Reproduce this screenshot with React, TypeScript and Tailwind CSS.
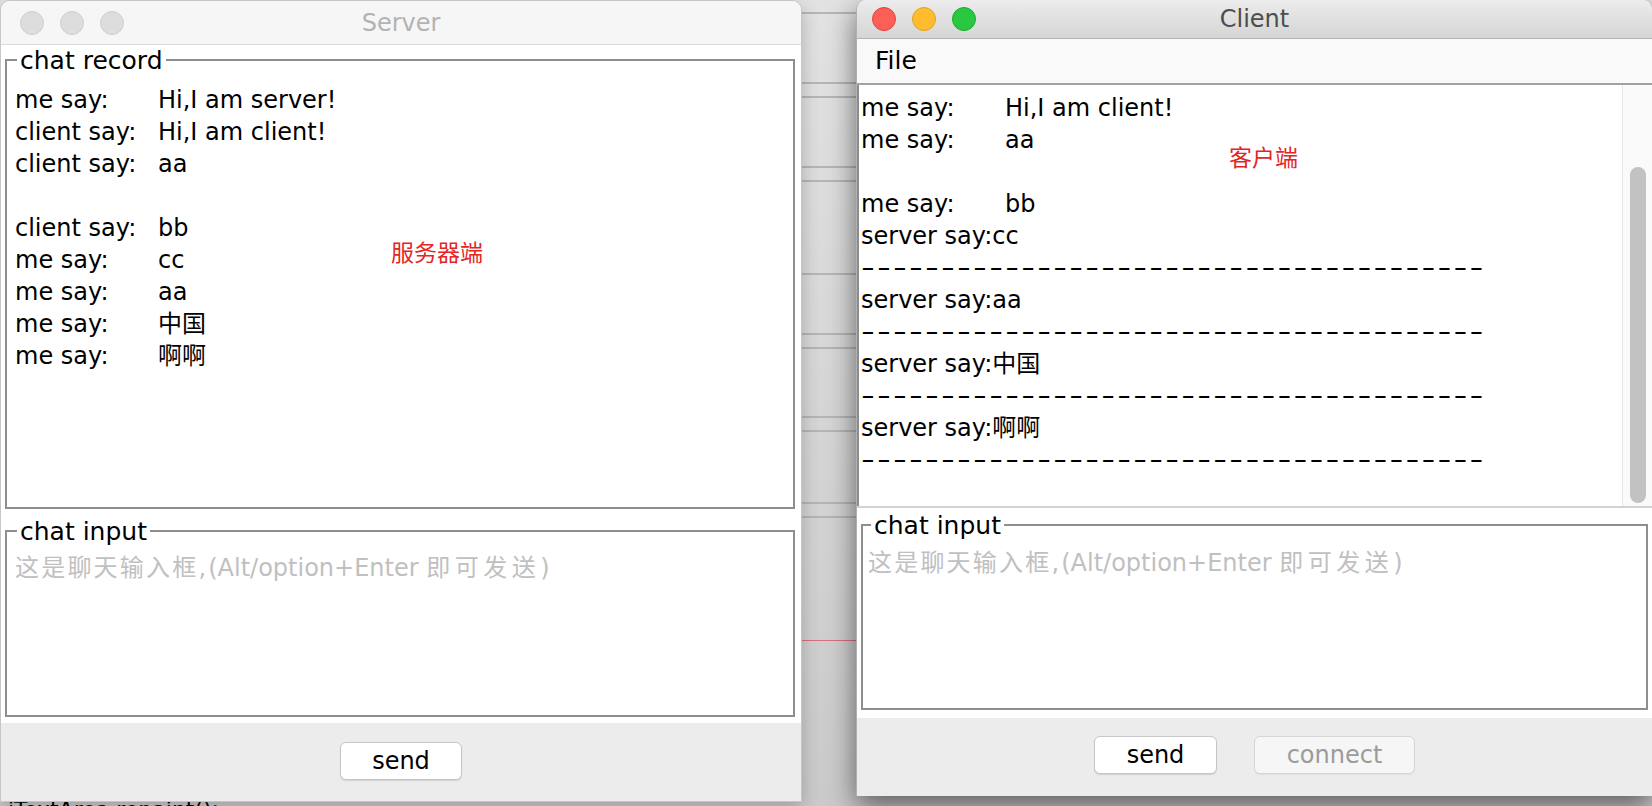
import React from 'react';

const ui = "font-['DejaVu_Sans','Noto_Sans_CJK_SC',sans-serif]";

// horizontal rules of the window that sits behind, visible in the gap
const desktopLines = [
  'top-[12px]', 'top-[82px]', 'top-[96px]', 'top-[166px]', 'top-[180px]', 'top-[273px]',
  'top-[333px]', 'top-[347px]', 'top-[416px]', 'top-[430px]', 'top-[502px]', 'top-[516px]',
];

function TitledBox({ label, className, labelClass, children }: { label: string, className: string, labelClass: string, children?: React.ReactNode }) {
  return (
    <div className={`relative border-2 border-[#8e8e8e] ${className}`}>
      <span className={`absolute top-[-13px] bg-white px-[3px] text-[25px] leading-[25px] text-black ${labelClass}`}>{label}</span>
      {children}
    </div>
  );
}

function Placeholder({ className }: { className: string }) {
  return (
    <div className={`whitespace-pre text-[24px] leading-[32px] text-[#c0c0c0] ${className}`}>
      <span className="tracking-[2.2px]">这是聊天输入框,</span>
      (Alt/option+Enter <span className="tracking-[4.5px]">即可发送</span>)
    </div>
  );
}

function Row({ who, text, col }: { who: string, text: string, col: string }) {
  return (
    <div className="whitespace-pre">
      <span className={`inline-block ${col}`}>{who}</span>
      {text}
    </div>
  );
}

function Dashes() {
  return (
    <div className="h-[32px] whitespace-pre">
      <span className="inline-block origin-left scale-x-[1.6] tracking-[1.35px]">{'-'.repeat(39)}</span>
    </div>
  );
}

function ServerWindow() {
  const rows: [string, string][] = [
    ['me say:', 'Hi,I am server!'],
    ['client say:', 'Hi,I am client!'],
    ['client say:', 'aa'],
    ['', ''],
    ['client say:', 'bb'],
    ['me say:', 'cc'],
    ['me say:', 'aa'],
    ['me say:', '中国'],
    ['me say:', '啊啊'],
  ];

  return (
    <div className="absolute left-0 top-0 z-10 flex h-[802px] w-[802px] flex-col overflow-hidden rounded-t-[10px] border border-[#c6c6c6] bg-white shadow-[0_6px_18px_rgba(0,0,0,0.22)]">
      {/* Title bar (inactive) */}
      <div className="relative flex h-[44px] shrink-0 items-center border-b border-[#dcdcdc] bg-[#f6f6f6]">
        <div className="flex gap-[16px] pl-[19px]">
          <div className="h-[24px] w-[24px] rounded-full border border-[#cfcfcf] bg-[#dddddd]" />
          <div className="h-[24px] w-[24px] rounded-full border border-[#cfcfcf] bg-[#dddddd]" />
          <div className="h-[24px] w-[24px] rounded-full border border-[#cfcfcf] bg-[#dddddd]" />
        </div>
        <div className="absolute inset-0 flex items-center justify-center text-[24px] text-[#b3b3b3]">Server</div>
      </div>

      {/* Body */}
      <div className="flex h-[678px] shrink-0 flex-col bg-white pl-[4px] pr-[6px]">
        <TitledBox label="chat record" className="mt-[14px] h-[450px]" labelClass="left-[10px]">
          <div className="pl-[8px] pt-[23px] text-[24px] leading-[32px] text-black">
            {rows.map(([who, text], i) => (
              <div key={i} className="h-[32px]">
                {who && <Row who={who} text={text} col="w-[143px]" />}
              </div>
            ))}
          </div>
          <span className="absolute left-[384px] top-[180px] text-[23px] leading-[24px] text-[#e3261f]">服务器端</span>
        </TitledBox>
        <TitledBox label="chat input" className="mt-[21px] h-[187px]" labelClass="left-[10px]">
          <Placeholder className="pl-[8px] pt-[20px]" />
        </TitledBox>
      </div>

      {/* Buttons */}
      <div className="flex flex-1 justify-center bg-[#ececec] pt-[19px]">
        <button className="flex h-[38px] w-[122px] items-center justify-center rounded-[6px] border border-[#c6c6c6] bg-white text-[24px] leading-none text-black shadow-[0_1px_1px_rgba(0,0,0,0.12)]">
          send
        </button>
      </div>
    </div>
  );
}

function ClientWindow() {
  return (
    <div className="absolute left-[856px] top-0 z-20 flex h-[796px] w-[796px] flex-col overflow-hidden rounded-t-[10px] border-l border-[#b0b0b0] bg-white shadow-[0_10px_28px_rgba(0,0,0,0.55)]">
      {/* Title bar (active) */}
      <div className="relative flex h-[39px] shrink-0 items-center border-b border-[#b4b4b4] bg-linear-to-b from-[#ececec] to-[#d5d5d5]">
        <div className="flex gap-[16px] pl-[15px]">
          <div className="h-[24px] w-[24px] rounded-full border border-[#e0443e] bg-[#fd5e57]" />
          <div className="h-[24px] w-[24px] rounded-full border border-[#dea123] bg-[#febc2e]" />
          <div className="h-[24px] w-[24px] rounded-full border border-[#1aab29] bg-[#28c840]" />
        </div>
        <div className="absolute inset-0 flex items-center justify-center text-[24px] text-[#4d4d4d]">Client</div>
      </div>

      {/* Menu bar */}
      <div className="flex h-[46px] shrink-0 items-center border-b-2 border-[#a2a2a2] bg-[#f9f9f9] pl-[18px] text-[25px] text-black">
        File
      </div>

      {/* Chat record, scrolled */}
      <div className="flex h-[421px] shrink-0">
        <div className="relative flex-1 border-l-2 border-[#8c8c8c] pl-[2px] pt-[7px] text-[24px] leading-[32px] text-black">
          <Row who="me say:" text="Hi,I am client!" col="w-[144px]" />
          <Row who="me say:" text="aa" col="w-[144px]" />
          <div className="h-[32px]" />
          <Row who="me say:" text="bb" col="w-[144px]" />
          <div>server say:cc</div>
          <Dashes />
          <div>server say:aa</div>
          <Dashes />
          <div>server say:中国</div>
          <Dashes />
          <div>server say:啊啊</div>
          <Dashes />
          <span className="absolute left-[370px] top-[61px] text-[23px] leading-[24px] text-[#e3261f]">客户端</span>
        </div>
        <div className="flex w-[30px] flex-col border-l border-[#e6e6e6] bg-[#fafafa] pb-[3px] pl-[7px] pt-[82px]">
          <div className="w-[16px] flex-1 rounded-full bg-[#c2c2c2]" />
        </div>
      </div>
      <div className="h-[2px] shrink-0 bg-[#d2d2d2]" />

      {/* Chat input */}
      <div className="h-[210px] shrink-0 bg-white pl-[4px] pr-[4px] pt-[16px]">
        <TitledBox label="chat input" className="h-[186px]" labelClass="left-[8px]">
          <Placeholder className="pl-[5px] pt-[21px]" />
        </TitledBox>
      </div>

      {/* Buttons */}
      <div className="flex flex-1 justify-center gap-[37px] bg-[#ececec] pt-[18px]">
        <button className="flex h-[38px] w-[123px] items-center justify-center rounded-[6px] border border-[#c6c6c6] bg-white text-[24px] leading-none text-black shadow-[0_1px_1px_rgba(0,0,0,0.12)]">
          send
        </button>
        <button disabled className="flex h-[38px] w-[161px] items-center justify-center rounded-[6px] border border-[#d6d6d6] bg-[#f6f6f6] text-[24px] leading-none text-[#9b9b9b] shadow-[0_1px_1px_rgba(0,0,0,0.06)]">
          connect
        </button>
      </div>
    </div>
  );
}

export default function App() {
  return (
    <div className={`relative h-[806px] w-[1652px] overflow-hidden bg-linear-to-b from-[#e2e2e2] to-[#cacaca] ${ui}`}>
      {desktopLines.map(t => (
        <div key={t} className={`absolute left-0 h-[2px] w-full bg-[#b5b5b5] ${t}`} />
      ))}
      <div className="absolute left-0 top-[640px] h-px w-full bg-[#d66f7e]" />
      <div className="absolute left-[8px] top-[799px] whitespace-pre text-[22px] leading-[22px] text-black">jTextArea.repaint();</div>

      <ServerWindow />
      <ClientWindow />
    </div>
  );
}
